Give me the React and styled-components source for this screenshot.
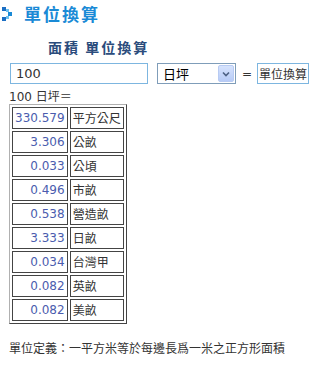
import React from "react";
import styled, { createGlobalStyle } from "styled-components";

const Global = createGlobalStyle`
  html, body { margin: 0; padding: 0; background: #fff; }
  body {
    font-family: "DejaVu Sans", "Noto Sans CJK TC", sans-serif;
    font-size: 12px;
    color: #333;
  }
`;

const Page = styled.div`
  width: 322px;
  height: 368px;
  overflow: hidden;
  display: flex;
  flex-direction: column;
`;

const Header = styled.div`
  display: flex;
  align-items: center;
  gap: 10px;
  padding: 4px 0 0 2px;
  height: 20px;
`;

const Title = styled.h1`
  margin: 0;
  font-family: "Noto Sans CJK TC", sans-serif;
  font-size: 17px;
  line-height: 20px;
  font-weight: 700;
  letter-spacing: 2px;
  color: #1a8ad6;
`;

const SubTitle = styled.h2`
  margin: 14px 0 0 48px;
  font-family: "Noto Sans CJK TC", sans-serif;
  font-size: 14px;
  line-height: 18px;
  font-weight: 700;
  letter-spacing: 2px;
  color: #2b4c7c;
`;

const FormRow = styled.div`
  display: flex;
  align-items: center;
  margin: 7px 0 0 10px;
  height: 21px;
`;

const TextInput = styled.input`
  box-sizing: border-box;
  width: ${(p) => p.$w}px;
  height: 21px;
  margin: 0;
  border: 1px solid #7db6e0;
  padding: 0 ${(p) => p.$pad}px;
  font-family: "DejaVu Sans", "Noto Sans CJK TC", sans-serif;
  font-size: ${(p) => p.$fs}px;
  color: #333;
  outline: none;
  background: #fff;
`;

const SelectWrap = styled.div`
  position: relative;
  margin-left: 9px;
  width: 79px;
  height: 21px;
`;

const Select = styled.select`
  appearance: none;
  -webkit-appearance: none;
  box-sizing: border-box;
  width: 100%;
  height: 100%;
  margin: 0;
  border: 1px solid #7f9db9;
  border-radius: 0;
  background: #fff;
  padding: 0 0 0 5px;
  font-family: "Noto Sans CJK TC", sans-serif;
  font-size: 13px;
  color: #000;
  outline: none;
`;

const Arrow = styled.span`
  position: absolute;
  top: 2px;
  right: 2px;
  width: 16px;
  height: 17px;
  box-sizing: border-box;
  border: 1px solid #b8cbf3;
  border-radius: 2px;
  background: linear-gradient(#d6e3fd, #b7cbf7);
  display: flex;
  align-items: center;
  justify-content: center;
  pointer-events: none;
`;

const Equals = styled.span`
  margin: 0 5px 0 6px;
  font-size: 12px;
  color: #333;
`;

const ResultLine = styled.div`
  margin: 7px 0 0 9px;
  font-size: 12px;
  line-height: 13px;
  color: #333;
`;

const Table = styled.table`
  margin: 0 0 0 9px;
  border: 1px solid;
  border-color: #b0b0b0 #444 #444 #b0b0b0;
  border-collapse: separate;
  border-spacing: 2px;
  width: 116px;
`;

const Cell = styled.td`
  height: 22px;
  box-sizing: border-box;
  padding: 0 2px;
  border: 1px solid #444;
  font-size: 12px;
  line-height: 18px;
  white-space: nowrap;
  text-align: ${(p) => (p.$num ? "right" : "left")};
  color: ${(p) => (p.$num ? "#4a5cae" : "#333")};
  font-family: ${(p) =>
    p.$num ? '"DejaVu Sans", sans-serif' : '"Noto Sans CJK TC", sans-serif'};
`;

const Definition = styled.p`
  margin: 17px 0 0 9px;
  font-family: "Noto Sans CJK TC", sans-serif;
  font-size: 12px;
  line-height: 14px;
  color: #333;
`;

const Logo = () => (
  <svg width="12" height="14" viewBox="0 0 12 14">
    <rect x="0" y="0" width="4" height="4" fill="#1c6fc4" />
    <rect x="4" y="2" width="3" height="3" fill="#6fc1ee" />
    <rect x="6" y="5" width="4" height="4" fill="#1a8ad6" />
    <rect x="4" y="9" width="3" height="3" fill="#6fc1ee" />
    <rect x="0" y="10" width="4" height="4" fill="#1c6fc4" />
  </svg>
);

const rows = [
  ["330.579", "平方公尺"],
  ["3.306", "公畝"],
  ["0.033", "公頃"],
  ["0.496", "市畝"],
  ["0.538", "營造畝"],
  ["3.333", "日畝"],
  ["0.034", "台灣甲"],
  ["0.082", "英畝"],
  ["0.082", "美畝"],
];

export default function App() {
  return (
    <Page>
      <Global />
      <Header>
        <Logo />
        <Title>單位換算</Title>
      </Header>
      <SubTitle>面積 單位換算</SubTitle>
      <FormRow>
        <TextInput $w={138} $pad={5} $fs={13} defaultValue="100" />
        <SelectWrap>
          <Select defaultValue="日坪">
            <option>日坪</option>
            <option>平方公尺</option>
          </Select>
          <Arrow>
            <svg width="8" height="6" viewBox="0 0 8 6">
              <path d="M1 1.5 L4 4.5 L7 1.5" fill="none" stroke="#4d6185" strokeWidth="1.6" />
            </svg>
          </Arrow>
        </SelectWrap>
        <Equals>=</Equals>
        <TextInput $w={52} $pad={1} $fs={12} defaultValue="單位換算" readOnly />
      </FormRow>
      <ResultLine>100 日坪＝</ResultLine>
      <Table>
        <tbody>
          {rows.map(([v, u], i) => (
            <tr key={i}>
              <Cell $num>{v}</Cell>
              <Cell>{u}</Cell>
            </tr>
          ))}
        </tbody>
      </Table>
      <Definition>單位定義：一平方米等於每邊長爲一米之正方形面積</Definition>
    </Page>
  );
}
